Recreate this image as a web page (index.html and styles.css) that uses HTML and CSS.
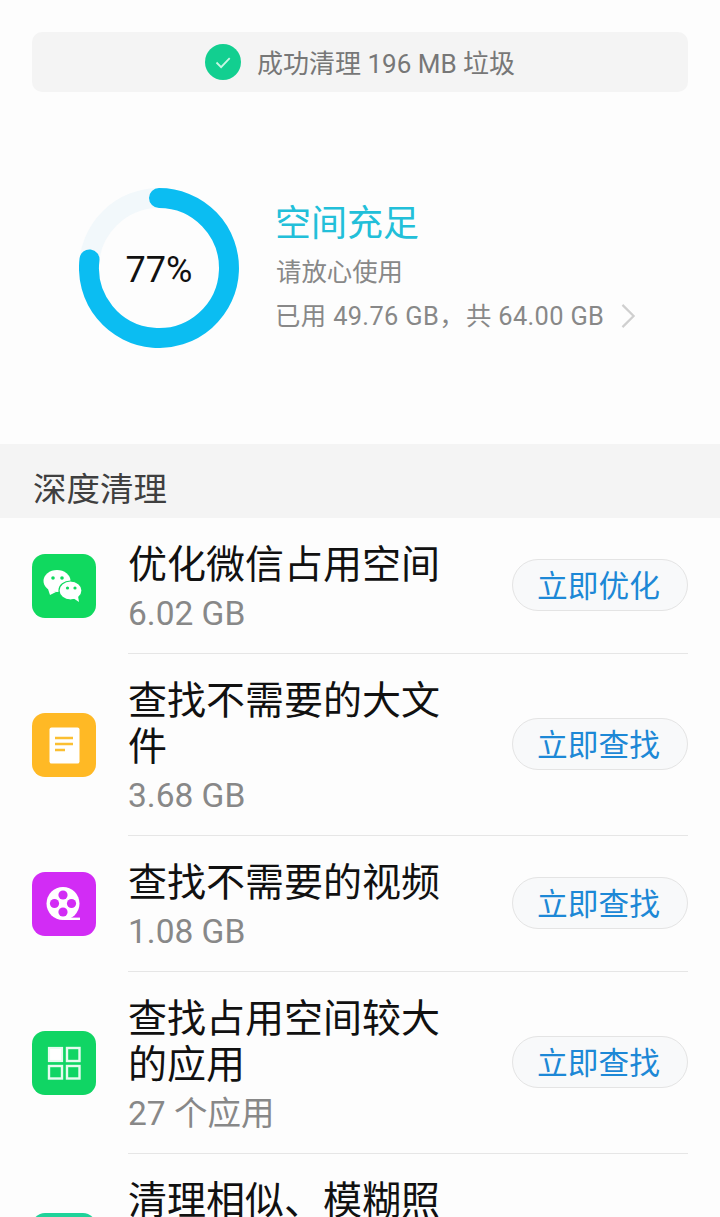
FILE: index.html
```html
<!DOCTYPE html>
<html lang="zh">
<head>
<meta charset="utf-8">
<title>清理</title>
<link rel="stylesheet" href="styles.css">
</head>
<body>
<div class="page">
  <div class="toast">
    <svg class="toast-icon" viewBox="0 0 36 36"><circle cx="18" cy="18" r="18" fill="#12cf90"/><path d="M11.5 18.5l4.6 4.6 8.6-9" fill="none" stroke="#c9f7e4" stroke-width="1.8"/></svg>
    <span>成功清理 196 MB 垃圾</span>
  </div>
  <section class="summary">
    <div class="ring">
      <svg viewBox="0 0 160 160" class="ring-svg">
        <circle cx="80" cy="80" r="70" fill="none" stroke="#f2f8fb" stroke-width="20"/>
        <path d="M80 10A70 70 0 1 1 10.5 71.5" fill="none" stroke="#0bbdf2" stroke-width="20" stroke-linecap="round"/>
      </svg>
      <span class="ring-label">77%</span>
    </div>
    <div class="summary-text">
      <div class="summary-title">空间充足</div>
      <div class="summary-sub">请放心使用</div>
      <div class="summary-usage">
        <span>已用 49.76 GB<span class="comma">，</span>共 64.00 GB</span>
        <svg class="chevron" viewBox="0 0 18 28"><path d="M2.5 2l12 12-12 12" fill="none" stroke="#cfcfcf" stroke-width="2.4"/></svg>
      </div>
    </div>
  </section>
  <h2 class="section-head">深度清理</h2>
  <ul class="list">
    <li class="row">
      <svg class="app-icon" viewBox="0 0 64 64">
        <rect width="64" height="64" rx="13" fill="#10d95f"/>
        <ellipse cx="25" cy="27" rx="13.5" ry="11" fill="#fff"/>
        <path d="M16 35l2 6 6-3z" fill="#fff"/>
        <ellipse cx="38.5" cy="36.5" rx="11.5" ry="9.5" fill="#fff" stroke="#10d95f" stroke-width="1.2"/>
        <path d="M41 44l6 4-1-6z" fill="#fff"/>
        <circle cx="21" cy="24" r="1.8" fill="#10d95f"/><circle cx="30" cy="24" r="1.8" fill="#10d95f"/>
        <circle cx="35.5" cy="34" r="1.6" fill="#10d95f"/><circle cx="43" cy="34" r="1.6" fill="#10d95f"/>
      </svg>
      <div class="row-body">
        <div class="row-text">
          <div class="row-title">优化微信占用空间</div>
          <div class="row-sub">6.02 GB</div>
        </div>
        <button class="pill">立即优化</button>
      </div>
    </li>
    <li class="row">
      <svg class="app-icon" viewBox="0 0 64 64">
        <rect width="64" height="64" rx="13" fill="#ffb925"/>
        <rect x="17.5" y="14.5" width="30" height="36" rx="2" fill="#fff"/>
        <path d="M23 25h18M23 31h18M23 37h10" stroke="#fbbf32" stroke-width="2.6"/>
      </svg>
      <div class="row-body">
        <div class="row-text">
          <div class="row-title">查找不需要的大文件</div>
          <div class="row-sub">3.68 GB</div>
        </div>
        <button class="pill">立即查找</button>
      </div>
    </li>
    <li class="row">
      <svg class="app-icon" viewBox="0 0 64 64">
        <rect width="64" height="64" rx="13" fill="#d22cf5"/>
        <path d="M32 46.8h16" stroke="#fff" stroke-width="2.4"/>
        <circle cx="31" cy="31.5" r="16.5" fill="#fff"/>
        <circle cx="31" cy="23" r="4.6" fill="#d22cf5"/><circle cx="31" cy="40" r="4.6" fill="#d22cf5"/>
        <circle cx="22.5" cy="31.5" r="4.6" fill="#d22cf5"/><circle cx="39.5" cy="31.5" r="4.6" fill="#d22cf5"/>
      </svg>
      <div class="row-body">
        <div class="row-text">
          <div class="row-title">查找不需要的视频</div>
          <div class="row-sub">1.08 GB</div>
        </div>
        <button class="pill">立即查找</button>
      </div>
    </li>
    <li class="row">
      <svg class="app-icon" viewBox="0 0 64 64">
        <rect width="64" height="64" rx="13" fill="#10d564"/>
        <rect x="17" y="17" width="13" height="13" fill="#fff" stroke="#e6fbef" stroke-width="2.2"/>
        <rect x="35" y="17" width="12.5" height="13" fill="none" stroke="#e6fbef" stroke-width="2.4"/>
        <rect x="17" y="35" width="13" height="12.5" fill="none" stroke="#e6fbef" stroke-width="2.4"/>
        <rect x="35" y="35" width="12.5" height="12.5" fill="none" stroke="#e6fbef" stroke-width="2.4"/>
      </svg>
      <div class="row-body">
        <div class="row-text">
          <div class="row-title">查找占用空间较大的应用</div>
          <div class="row-sub">27 个应用</div>
        </div>
        <button class="pill">立即查找</button>
      </div>
    </li>
    <li class="row">
      <svg class="app-icon" viewBox="0 0 64 64">
        <rect width="64" height="64" rx="13" fill="#1fd39a"/>
      </svg>
      <div class="row-body">
        <div class="row-text">
          <div class="row-title">清理相似、模糊照片</div>
          <div class="row-sub">1.02 GB</div>
        </div>
        <button class="pill">立即查找</button>
      </div>
    </li>
  </ul>
</div>
</body>
</html>
```
FILE: styles.css
```css
* { box-sizing: border-box; }
html, body { margin: 0; padding: 0; height: 1217px; overflow: hidden; }
body {
  background: #fdfdfd;
  font-family: Roboto, "Noto Sans CJK SC", sans-serif;
}
.page { padding-top: 32px; }
.toast {
  margin: 0 32px;
  height: 60px;
  background: #f4f4f4;
  border-radius: 10px;
  display: flex;
  align-items: center;
  justify-content: center;
  gap: 16px;
  color: #777;
  font-size: 26px;
}
.toast span { padding-bottom: 2px; }
.summary {
  height: 352px;
  padding-left: 79px;
  display: flex;
  align-items: center;
  gap: 37px;
}
.toast-icon { width: 36px; height: 36px; flex: none; }
.ring { position: relative; width: 160px; height: 160px; flex: none; }
.ring-svg { display: block; width: 160px; height: 160px; }
.ring-label {
  position: absolute;
  inset: 0;
  display: flex;
  align-items: center;
  justify-content: center;
  font-size: 36px;
  color: #111;
  padding-top: 3px;
}
.summary-text { display: flex; flex-direction: column; margin-top: -4px; }
.summary-title { font-size: 36px; line-height: 50px; color: #22bfd9; margin-left: -1px; }
.summary-sub { font-size: 25.4px; line-height: 36px; margin-top: 5px; color: #888; }
.summary-usage {
  display: flex;
  align-items: center;
  gap: 16px;
  font-size: 25.4px;
  line-height: 36px;
  margin-top: 8px;
  margin-left: -1px;
  letter-spacing: .35px;
  color: #888;
}
.comma { margin-right: 1px; }
.chevron { width: 17px; height: 26px; flex: none; }
.section-head {
  margin: 0;
  height: 74px;
  padding: 25px 33px 0;
  background: #f4f4f4;
  font-size: 33.5px;
  line-height: 42px;
  font-weight: 400;
  color: #3f3f3f;
}
.list { margin: 0; padding: 0; list-style: none; }
.row { display: flex; align-items: center; padding-left: 32px; }
.app-icon { width: 64px; height: 64px; flex: none; margin-right: 32px; }
.row-body {
  flex: 1;
  display: flex;
  align-items: center;
  justify-content: space-between;
  margin-right: 32px;
  border-bottom: 1px solid #e6e6e6;
}
.row-text { width: 320px; padding: 24px 0 16px; }
.row-title { font-size: 39px; line-height: 46px; color: #111; }
.row-sub { font-size: 33.5px; line-height: 46px; color: #888; margin-top: 3px; }
.pill {
  width: 176px;
  height: 52px;
  margin-bottom: 2px;
  border-radius: 26px;
  border: 1px solid #e4e4e4;
  background: #f8f9fa;
  color: #1d88d6;
  font-family: inherit;
  font-size: 30.7px;
  padding: 0 3px 3px 0;
}
```
